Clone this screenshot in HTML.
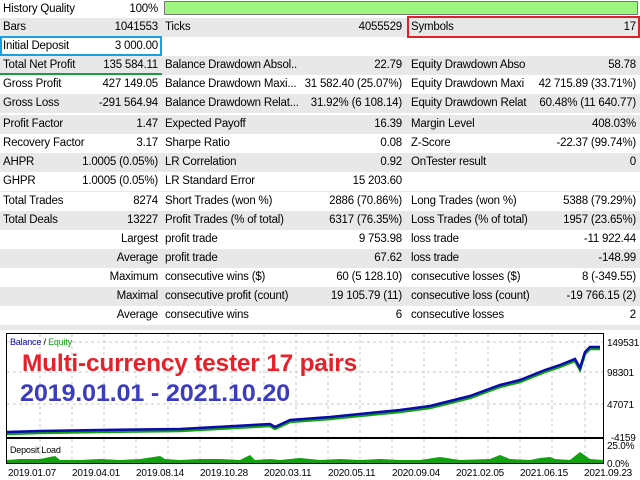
<!DOCTYPE html>
<html><head><meta charset="utf-8"><style>
*{margin:0;padding:0;box-sizing:border-box}
body{width:640px;height:480px;background:#fff;font-family:"Liberation Sans",sans-serif;font-size:11.5px;color:#000;position:relative;overflow:hidden;letter-spacing:-0.2px}
.r{position:absolute;left:0;width:640px;height:19px;line-height:19px}
.g{background:#e8e8e8}
.r span{position:absolute;white-space:nowrap}
.l1{left:3px}.v1{right:482px}.l2{left:165px}.v2{right:238px}.l3{left:411px}.v3{right:4px}
.box{position:absolute;border:2px solid}
</style></head><body>
<div class="r" style="top:0;height:18px;line-height:18px"><span class="l1">History Quality</span><span class="v1">100%</span></div>
<div style="position:absolute;left:164px;top:1px;width:474px;height:14px;background:#9cf57e;border:1px solid #777"></div>
<div class="r g" style="top:18px"><span class="l1">Bars</span><span class="v1">1041553</span><span class="l2">Ticks</span><span class="v2">4055529</span><span class="l3">Symbols</span><span class="v3">17</span></div>
<div class="box" style="left:407px;top:16px;width:233px;height:22px;border-color:#e0202a"></div>
<div class="r" style="top:37px"><span class="l1">Initial Deposit</span><span class="v1">3 000.00</span></div>
<div class="box" style="left:0;top:36px;width:162px;height:20px;border-color:#1aa0e0"></div>
<div class="r g" style="top:56px"><span class="l1">Total Net Profit</span><span class="v1">135 584.11</span><span class="l2">Balance Drawdown Absol..</span><span class="v2">22.79</span><span class="l3">Equity Drawdown Abso</span><span class="v3">58.78</span></div>
<div style="position:absolute;left:0;top:73px;width:162px;height:2px;background:#1e9a40"></div>
<div class="r" style="top:75px"><span class="l1">Gross Profit</span><span class="v1">427 149.05</span><span class="l2">Balance Drawdown Maxi...</span><span class="v2">31 582.40 (25.07%)</span><span class="l3">Equity Drawdown Maxi</span><span class="v3">42 715.89 (33.71%)</span></div>
<div class="r g" style="top:94px"><span class="l1">Gross Loss</span><span class="v1">-291 564.94</span><span class="l2">Balance Drawdown Relat...</span><span class="v2">31.92% (6 108.14)</span><span class="l3">Equity Drawdown Relat</span><span class="v3">60.48% (11 640.77)</span></div>
<div class="r g" style="top:115px"><span class="l1">Profit Factor</span><span class="v1">1.47</span><span class="l2">Expected Payoff</span><span class="v2">16.39</span><span class="l3">Margin Level</span><span class="v3">408.03%</span></div>
<div class="r" style="top:134px"><span class="l1">Recovery Factor</span><span class="v1">3.17</span><span class="l2">Sharpe Ratio</span><span class="v2">0.08</span><span class="l3">Z-Score</span><span class="v3">-22.37 (99.74%)</span></div>
<div class="r g" style="top:153px"><span class="l1">AHPR</span><span class="v1">1.0005 (0.05%)</span><span class="l2">LR Correlation</span><span class="v2">0.92</span><span class="l3">OnTester result</span><span class="v3">0</span></div>
<div class="r" style="top:172px"><span class="l1">GHPR</span><span class="v1">1.0005 (0.05%)</span><span class="l2">LR Standard Error</span><span class="v2">15 203.60</span></div>
<div style="position:absolute;left:0;top:191px;width:640px;height:1px;background:#e8e8e8"></div>
<div class="r" style="top:192px"><span class="l1">Total Trades</span><span class="v1">8274</span><span class="l2">Short Trades (won %)</span><span class="v2">2886 (70.86%)</span><span class="l3">Long Trades (won %)</span><span class="v3">5388 (79.29%)</span></div>
<div class="r g" style="top:211px"><span class="l1">Total Deals</span><span class="v1">13227</span><span class="l2">Profit Trades (% of total)</span><span class="v2">6317 (76.35%)</span><span class="l3">Loss Trades (% of total)</span><span class="v3">1957 (23.65%)</span></div>
<div class="r" style="top:230px"><span class="v1">Largest</span><span class="l2">profit trade</span><span class="v2">9 753.98</span><span class="l3">loss trade</span><span class="v3">-11 922.44</span></div>
<div class="r g" style="top:249px"><span class="v1">Average</span><span class="l2">profit trade</span><span class="v2">67.62</span><span class="l3">loss trade</span><span class="v3">-148.99</span></div>
<div class="r" style="top:268px"><span class="v1">Maximum</span><span class="l2">consecutive wins ($)</span><span class="v2">60 (5 128.10)</span><span class="l3">consecutive losses ($)</span><span class="v3">8 (-349.55)</span></div>
<div class="r g" style="top:287px"><span class="v1">Maximal</span><span class="l2">consecutive profit (count)</span><span class="v2">19 105.79 (11)</span><span class="l3">consecutive loss (count)</span><span class="v3">-19 766.15 (2)</span></div>
<div class="r" style="top:306px"><span class="v1">Average</span><span class="l2">consecutive wins</span><span class="v2">6</span><span class="l3">consecutive losses</span><span class="v3">2</span></div>
<div style="position:absolute;left:0;top:325px;width:640px;height:5px;background:#e8e8e8"></div>
<svg style="position:absolute;left:0;top:330px" width="640" height="150" font-family="Liberation Sans, sans-serif">
<g stroke="#c8c8c8" stroke-dasharray="3,3" stroke-width="1">
<path d="M40 4V107M72 4V107M104 4V107M136 4V107M168 4V107M200 4V107M232 4V107M264 4V107M296 4V107M328 4V107M360 4V107M392 4V107M424 4V107M456 4V107M488 4V107M520 4V107M552 4V107M585 4V107"/>
<path d="M7 12H603M7 42H603M7 74H603"/>
<path d="M40 109V133M72 109V133M104 109V133M136 109V133M168 109V133M200 109V133M232 109V133M264 109V133M296 109V133M328 109V133M360 109V133M392 109V133M424 109V133M456 109V133M488 109V133M520 109V133M552 109V133M585 109V133"/>
</g>
<rect x="6.5" y="3.5" width="597" height="104" fill="none" stroke="#000"/>
<rect x="6.5" y="108.5" width="597" height="25" fill="none" stroke="#000"/>
<polyline fill="none" stroke="#10a010" stroke-width="2.5" points="7,104 40,103 100,102 180,101 270,96 275,99 290,92 330,89 400,82 430,78 470,68 500,57 520,52 545,42 560,37 575,31 580,40 585,24 590,19 600,19"/>
<polyline fill="none" stroke="#0a0ab0" stroke-width="2.5" points="7,102 40,101 100,100 180,99 270,94 275,97 290,90 330,87 400,80 430,76 470,66 500,55 520,50 545,40 560,35 575,29 580,38 585,22 590,17 600,17"/>
<path d="M7 133 L7 130 20 129 40 129 55 126 60 130 80 130 100 129 120 130 140 129 160 126 165 129 180 130 200 129 220 129 240 130 250 125 255 130 270 129 280 130 300 128 320 130 340 129 360 130 380 129 400 130 420 130 440 127 460 130 490 129 500 125 510 129 530 130 540 128 550 127 555 129 570 130 580 122 590 129 603 130 603 133Z" fill="#10a010"/>
<text x="10" y="15" font-size="9" fill="#0a0ab0">Balance <tspan fill="#000">/</tspan> <tspan fill="#10a010">Equity</tspan></text>
<text x="10" y="123" font-size="9">Deposit Load</text>
<text x="22" y="41" font-size="24" font-weight="bold" fill="#e8202a" textLength="335" lengthAdjust="spacingAndGlyphs">Multi-currency tester 17 pairs</text>
<text x="20" y="71" font-size="24" font-weight="bold" fill="#3c3cc0" textLength="270" lengthAdjust="spacingAndGlyphs">2019.01.01 - 2021.10.20</text>
<g font-size="10" fill="#000">
<text x="607" y="16">149531</text><text x="607" y="46">98301</text><text x="607" y="78">47071</text><text x="611" y="111">-4159</text>
<text x="607" y="119">25.0%</text><text x="607" y="137">0.0%</text>
<text x="8" y="146">2019.01.07</text><text x="72" y="146">2019.04.01</text><text x="136" y="146">2019.08.14</text><text x="200" y="146">2019.10.28</text><text x="264" y="146">2020.03.11</text><text x="328" y="146">2020.05.11</text><text x="392" y="146">2020.09.04</text><text x="456" y="146">2021.02.05</text><text x="520" y="146">2021.06.15</text><text x="584" y="146">2021.09.23</text>
</g>
</svg>
</body></html>
